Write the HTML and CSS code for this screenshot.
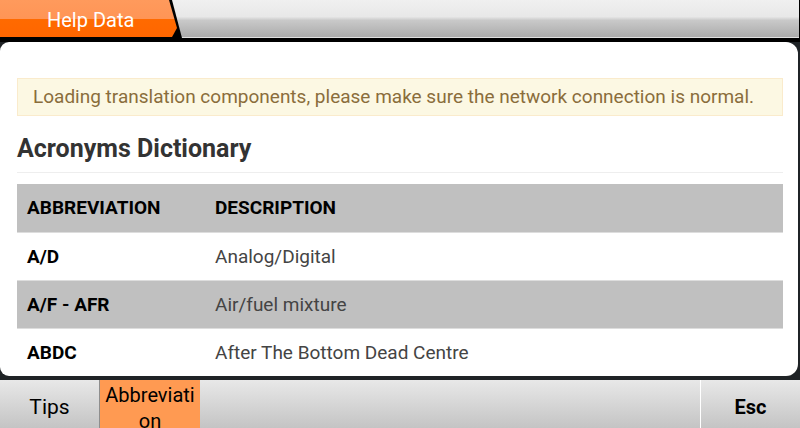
FILE: index.html
```html
<!DOCTYPE html>
<html>
<head>
<meta charset="utf-8">
<link rel="stylesheet" href="styles.css">
</head>
<body>
<div class="app">
  <header class="topbar">
    <div class="tab">Help Data</div>
    <div class="topfill"></div>
  </header>
  <main class="panel">
    <div class="notice">Loading translation components, please make sure the network connection is normal.</div>
    <h1 class="title">Acronyms Dictionary</h1>
    <table class="dict">
      <thead>
        <tr><th class="c1">ABBREVIATION</th><th>DESCRIPTION</th></tr>
      </thead>
      <tbody>
        <tr><td class="c1">A/D</td><td>Analog/Digital</td></tr>
        <tr class="alt"><td class="c1">A/F - AFR</td><td>Air/fuel mixture</td></tr>
        <tr><td class="c1">ABDC</td><td>After The Bottom Dead Centre</td></tr>
      </tbody>
    </table>
  </main>
  <footer class="bottombar">
    <div class="btn tips">Tips</div>
    <div class="btn active">Abbreviation</div>
    <div class="btn spacer"></div>
    <div class="btn esc">Esc</div>
  </footer>
</div>
</body>
</html>
```
FILE: styles.css
```css
html, body {
  margin: 0;
  padding: 0;
  width: 800px;
  height: 428px;
  overflow: hidden;
  background: #1f2326;
  font-family: Roboto, "Liberation Sans", sans-serif;
}
.app {
  display: flex;
  flex-direction: column;
  width: 800px;
  height: 428px;
}
.topbar {
  display: flex;
  height: 42px;
  background: #000;
  flex: none;
}
.tab {
  width: 177px;
  height: 37px;
  flex: none;
  background: linear-gradient(#ff9a5c 0, #ff9556 50%, #ff6a00 52%, #ff6600 100%);
  clip-path: polygon(0 0, 169px 0, 177px 28px, 172px 37px, 0 37px);
  color: #fff;
  font-size: 20px;
  line-height: 40px;
  padding-left: 47px;
  box-sizing: border-box;
}
.topfill {
  flex: 1;
  height: 38px;
  margin-left: -5px;
  margin-right: 1px;
  background: linear-gradient(#f0f0f0 0, #e8e8e8 45%, #c9c9c9 55%, #ababab 100%);
  clip-path: polygon(0 0, 100% 0, 100% 100%, 10px 100%);
  border-bottom: 1px solid #e0e0e0;
  box-sizing: border-box;
}
.panel {
  flex: 1;
  background: #fff;
  margin-right: 2px;
  border-radius: 9px 12px 12px 9px;
  padding: 36px 15px 0 17px;
  overflow: hidden;
  min-height: 0;
}
.notice {
  background: #fcf8e3;
  border: 1px solid #faebcc;
  color: #8a6d3b;
  font-size: 19px;
  height: 38px;
  box-sizing: border-box;
  padding: 0 15px;
  line-height: 36px;
  white-space: nowrap;
}
.title {
  margin: 0;
  padding-top: 18px;
  height: 57px;
  box-sizing: border-box;
  font-size: 25px;
  font-weight: 700;
  color: #333;
  line-height: 30px;
  border-bottom: 1px solid #eee;
}
.dict {
  margin-top: 11px;
  width: 100%;
  border-collapse: collapse;
  font-size: 19px;
}
.dict th, .dict td {
  height: 48px;
  padding: 0 10px;
  text-align: left;
  box-sizing: border-box;
  border-top: 1px solid #ddd;
}
.dict thead th {
  background: #c0c0c0;
  color: #000;
  font-weight: 700;
  border-top: none;
}
.dict .c1 {
  width: 188px;
  color: #000;
  font-weight: 700;
}
.dict td {
  color: #444;
}
.dict tr.alt td {
  background: #c0c0c0;
}
.bottombar {
  flex: none;
  height: 48px;
  margin-top: 4px;
  display: flex;
}
.btn {
  height: 48px;
  width: 99px;
  flex: none;
  background: linear-gradient(#e8e8e8, #c4c4c4);
  color: #000;
  font-size: 21px;
  display: flex;
  align-items: center;
  justify-content: center;
  text-align: center;
  box-sizing: border-box;
  padding-top: 6px;
}
.tips {
  border-right: 1px solid #8e8e8e;
  width: 100px;
}
.active {
  background: #ff9a52;
  width: 100px;
  font-size: 20px;
  line-height: 26px;
  word-break: break-all;
  padding: 2px 4px 0;
  align-items: flex-start;
}
.spacer {
  flex: 1;
  border-right: 1px solid #fff;
}
.esc {
  width: 99px;
  font-weight: 700;
  font-size: 20px;
}
```
